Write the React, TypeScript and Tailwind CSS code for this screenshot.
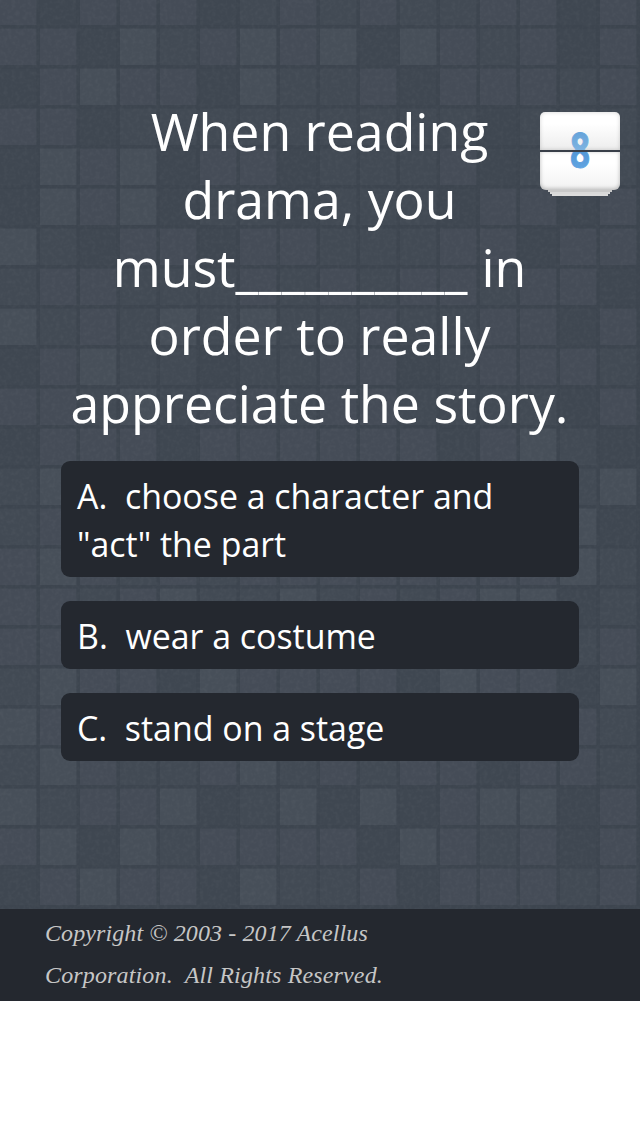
const TILE = 40
const TILE_SHADES = ['#3f4751', '#424a54', '#454c57', '#474f59']

// One digit per tile, an index into TILE_SHADES
const TILE_ROWS = [
  '2022201212112202',
  '2203123230321202',
  '0232203112022212',
  '2201111111110111',
  '0323022011120111',
  '0323011011102202',
  '3102202211122022',
  '1221112121221220',
  '3121313112112202',
  '0231101122012221',
  '2213122122111102',
  '0222022222202310',
  '1312132122221213',
  '1211122222222230',
  '2321212222222231',
  '2212311312123301',
  '2222122222222212',
  '1322032222032203',
  '3222122222222221',
  '1321123121220221',
  '3122301303023302',
  '2303122220321202',
  '0232203112022212',
]

const OPTIONS = [
  { letter: 'A', text: 'choose a character and "act" the part' },
  { letter: 'B', text: 'wear a costume' },
  { letter: 'C', text: 'stand on a stage' },
]

function TiledBackground() {
  return (
    <svg className="absolute inset-0 w-full h-full" aria-hidden="true">
      <defs>
        <filter id="grain" x="0" y="0" width="100%" height="100%">
          <feTurbulence type="fractalNoise" baseFrequency="0.25" numOctaves="2" seed="4" />
          <feColorMatrix values="0 0 0 0 1  0 0 0 0 1  0 0 0 0 1  0.07 0 0 0 -0.03" />
        </filter>
      </defs>
      <rect width="100%" height="100%" fill="#3d454f" />
      {TILE_ROWS.map((row, y) =>
        row.split('').map((shade, x) => (
          <rect
            key={`${x}-${y}`}
            x={x * TILE}
            y={y * TILE - 11.5}
            width={36.5}
            height={36.5}
            fill={TILE_SHADES[Number(shade)]}
          />
        )),
      )}
      <rect width="100%" height="100%" filter="url(#grain)" />
    </svg>
  )
}

function FlipCounter({ value }: { value: number }) {
  return (
    <div className="absolute left-[540px] top-[112px] w-20 flex flex-col items-center">
      <div className="relative w-20 h-[78px]">
        <div className="flex flex-col gap-[2px] h-full">
          <div className="h-[38px] rounded-t-[5px] bg-linear-to-b from-white from-30% to-[#ededed] shadow-[inset_0_0_4px_rgba(0,0,0,0.18)]" />
          <div className="h-[38px] rounded-b-[6px] bg-linear-to-b from-white from-30% to-[#f2f2f2] shadow-[inset_0_-1px_4px_rgba(0,0,0,0.28)]" />
        </div>
        <svg className="absolute inset-0" width="80" height="78" viewBox="0 0 80 78">
          <defs>
            <linearGradient id="digit" gradientUnits="userSpaceOnUse" x1="0" y1="20" x2="0" y2="57">
              <stop offset="0" stopColor="#65a3da" />
              <stop offset="0.5" stopColor="#80b4e1" />
              <stop offset="0.52" stopColor="#5296d5" />
              <stop offset="1" stopColor="#62a5e2" />
            </linearGradient>
          </defs>
          <text
            x="40"
            y="56"
            textAnchor="middle"
            textLength="20"
            lengthAdjust="spacingAndGlyphs"
            fill="url(#digit)"
            stroke="url(#digit)"
            strokeWidth="1"
            className="font-['Open_Sans'] font-bold text-[48px]"
          >
            {value}
          </text>
        </svg>
        <div className="absolute inset-x-0 top-[38px] h-[2px] bg-[#393f49]" />
      </div>
      <div className="w-16 h-[2px] bg-[#c9c9c9]" />
      <div className="w-[60px] h-[2px] bg-[#d9d9d9]" />
      <div className="w-14 h-[2px] bg-[#dcdcdc]" />
    </div>
  )
}

export default function App() {
  return (
    <div className="w-[640px] h-[1136px] bg-white font-['Open_Sans',sans-serif] text-white">
      <main className="relative h-[909px] overflow-hidden">
        <TiledBackground />
        <div className="relative flex flex-col gap-6 px-[61px] pt-[97px]">
          <h1 className="pr-px text-[51.8px] leading-[68px] text-center whitespace-nowrap">
            When reading
            <br />
            drama, you
            <br />
            must<span className="tracking-[0.55px]">__________</span> in
            <br />
            order to really
            <br />
            appreciate the story.
          </h1>
          {OPTIONS.map(({ letter, text }) => (
            <button
              key={letter}
              className="rounded-[9px] bg-[#24282f] px-4 pt-[11px] pb-[9px] text-left text-[33.9px] leading-[48px] whitespace-pre-wrap"
            >
              {`${letter}.  ${text}`}
            </button>
          ))}
        </div>
        <FlipCounter value={8} />
      </main>
      <footer className="h-[92px] bg-[#24282f] pl-[45px] pt-[3px] font-['Liberation_Serif',serif] italic text-[24px] leading-[42px] text-[#c6c6c6]">
        <p className="tracking-[0.1px]">Copyright © 2003 - 2017 Acellus</p>
        <p className="tracking-[0.15px] whitespace-pre">Corporation.  All Rights Reserved.</p>
      </footer>
    </div>
  )
}
